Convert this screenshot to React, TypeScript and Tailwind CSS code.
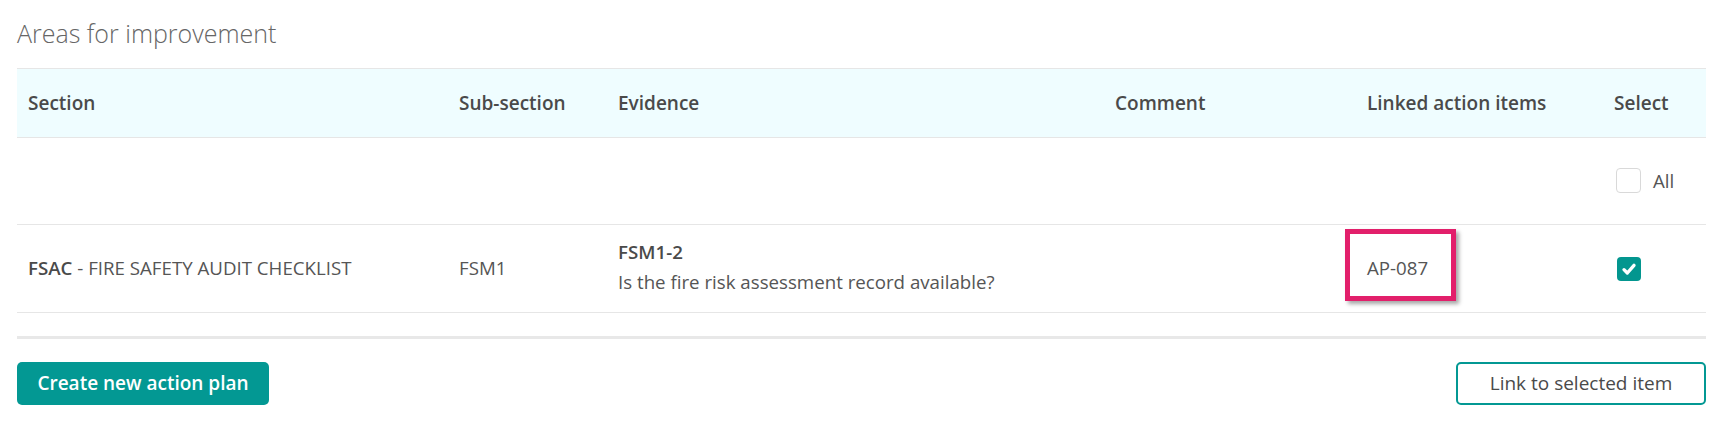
import React from 'react'

const cols = 'grid grid-cols-[431px_159px_497px_252px_247px_103px]'

const CheckIcon = () => (
  <svg viewBox="0 0 24 24" className="w-[16px] h-[16px]" fill="none" stroke="white" strokeWidth={5} strokeLinecap="round" strokeLinejoin="round">
    <path d="M4.5 13l5 5L19.5 6.5" />
  </svg>
)

const App = () => {
  return (
    <div className="w-[1734px] h-[427px] bg-white pl-[17px] pr-[28px] pt-[16px] font-['Open_Sans',sans-serif] text-[#555]">
      <h1 className="text-[25px] leading-[34px] font-light text-[#666]">Areas for improvement</h1>

      <div className="mt-[18px]">
        {/* header */}
        <div className={`${cols} h-[70px] items-center bg-[#effdff] border-y border-[#e6e6e6] text-[19px] font-[550] text-[#4a4a4a]`}>
          <div className="pl-[11px]">Section</div>
          <div className="pl-[11px]">Sub-section</div>
          <div className="pl-[11px]">Evidence</div>
          <div className="pl-[11px]">Comment</div>
          <div className="pl-[11px]">Linked action items</div>
          <div className="pl-[11px]">Select</div>
        </div>

        {/* select all row */}
        <div className={`${cols} h-[87px] items-center border-b border-[#e6e6e6] text-[18.7px]`}>
          <div />
          <div />
          <div />
          <div />
          <div />
          <label className="pl-[13px] flex items-center gap-[12px]">
            <span className="w-[25px] h-[25px] rounded-[4px] border border-[#d9d9d9] bg-white" />
            <span>All</span>
          </label>
        </div>

        {/* data row */}
        <div className={`${cols} h-[88px] items-center border-b border-[#e6e6e6] text-[18.7px]`}>
          <div className="pl-[11px]">
            <span className="font-semibold text-[#4a4a4a]">FSAC</span> - FIRE SAFETY AUDIT CHECKLIST
          </div>
          <div className="pl-[11px]">FSM1</div>
          <div className="pl-[11px] leading-[30px] mt-[-3px]">
            <div className="font-semibold text-[#4a4a4a]">FSM1-2</div>
            <div>Is the fire risk assessment record available?</div>
          </div>
          <div />
          <div className="relative pl-[11px]">
            AP-087
            <span className="absolute left-[-11px] top-1/2 mt-[-39px] w-[111px] h-[72px] border-[5px] border-[#e21f6b] shadow-[3px_3px_4px_rgba(0,0,0,0.35)]" />
          </div>
          <div className="pl-[14px]">
            <span className="w-[24px] h-[24px] rounded-[4px] bg-[#03968f] flex items-center justify-center">
              <CheckIcon />
            </span>
          </div>
        </div>

        <div className="mt-[23px] h-[3px] bg-[#e8e8e8]" />
      </div>

      <div className="mt-[23px] flex justify-between">
        <button className="w-[252px] h-[43px] rounded-[5px] bg-[#039893] text-white text-[19px] font-semibold">
          Create new action plan
        </button>
        <button className="w-[250px] h-[43px] rounded-[5px] border-2 border-[#039893] bg-white text-[#4a4a4a] text-[19px] font-medium">
          Link to selected item
        </button>
      </div>
    </div>
  )
}

export default App
